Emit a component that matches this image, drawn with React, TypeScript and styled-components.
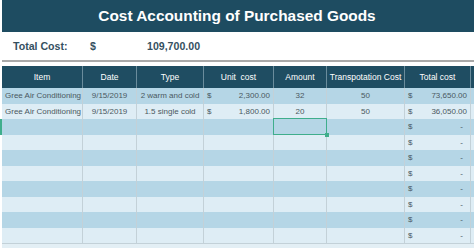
import React from "react";
import styled, { createGlobalStyle } from "styled-components";

const GlobalStyle = createGlobalStyle`
  html, body {
    margin: 0;
    padding: 0;
    background: #ffffff;
    font-family: "Liberation Sans", Arial, sans-serif;
  }
`;

const Sheet = styled.div`
  width: 474px;
  height: 248px;
  overflow: hidden;
  padding-left: 2px;
  box-sizing: border-box;
`;

const TitleBar = styled.div`
  height: 32px;
  background: #1e4c61;
  color: #ffffff;
  display: flex;
  align-items: center;
  justify-content: center;
  font-size: 15.4px;
  font-weight: bold;
  padding-right: 2px;
`;

const TotalRow = styled.div`
  height: 28px;
  display: flex;
  align-items: center;
  font-size: 10.6px;
  font-weight: bold;
  color: #35505f;
  border-bottom: 2px solid #a9a9a9;
`;

const TotalLabel = styled.span`
  width: 77px;
  padding-left: 11px;
`;

const TotalCurrency = styled.span`
  width: 57px;
`;

const Spacer = styled.div`
  height: 4px;
`;

const Table = styled.div`
  margin-left: -2px;
`;

const columns = "2px 81px 54px 67px 70px 53px 78px 66px 1fr";

const HeaderRow = styled.div`
  display: grid;
  grid-template-columns: ${columns};
  height: 22px;
`;

const HeaderCell = styled.div<{ $last?: boolean }>`
  background: #1f4d62;
  color: #ffffff;
  font-size: 8.5px;
  display: flex;
  align-items: center;
  justify-content: center;
  white-space: nowrap;
  border-right: 1px solid ${(p) => (p.$last ? "transparent" : "#6a8c9c")};
`;

const Gutter = styled.div<{ $active?: boolean }>`
  background: ${(p) => (p.$active ? "#3fae8c" : "#ffffff")};
`;

const DataRow = styled.div<{ $dark: boolean }>`
  display: grid;
  grid-template-columns: ${columns};
  height: 15.5px;
  background: ${(p) => (p.$dark ? "#b5d6e6" : "#deedf5")};
`;

const FillerRow = styled.div`
  height: 5px;
  margin-left: 2px;
  border-top: 1px solid #c3d1d8;
  background: #e3eff5;
`;

const Cell = styled.div<{ $align?: "left" | "center" | "right"; $open?: boolean }>`
  position: relative;
  font-size: 8px;
  color: #4a5861;
  display: flex;
  align-items: center;
  justify-content: ${(p) =>
    p.$align === "center" ? "center" : p.$align === "right" ? "flex-end" : "flex-start"};
  padding: 0 3px 0 3px;
  white-space: nowrap;
  overflow: ${(p) => (p.$open ? "visible" : "hidden")};
  border-right: 1px solid #c3d1d8;
  box-sizing: border-box;
`;

const Money = styled(Cell)`
  justify-content: space-between;
`;

const Selection = styled.div`
  position: absolute;
  top: -1px;
  left: -1px;
  right: -1px;
  bottom: 0;
  border: 1.5px solid #3fae8c;
  pointer-events: none;
  z-index: 2;
  &::after {
    content: "";
    position: absolute;
    right: -3px;
    bottom: -3px;
    width: 4px;
    height: 4px;
    background: #3fae8c;
  }
`;

type Row = {
  item: string;
  date: string;
  type: string;
  unit: string;
  amount: string;
  transport: string;
  total: string;
};

const rows: Row[] = [
  { item: "Gree Air Conditioning", date: "9/15/2019", type: "2 warm and cold", unit: "2,300.00", amount: "32", transport: "50", total: "73,650.00" },
  { item: "Gree Air Conditioning", date: "9/15/2019", type: "1.5 single cold", unit: "1,800.00", amount: "20", transport: "50", total: "36,050.00" },
];

const headers = ["Item", "Date", "Type", "Unit\u00a0\u00a0cost", "Amount", "Transpotation Cost", "Total cost", ""];

export default function App() {
  const all: (Row | null)[] = [...rows, ...Array(8).fill(null)];
  return (
    <Sheet>
      <GlobalStyle />
      <TitleBar>Cost Accounting of Purchased Goods</TitleBar>
      <TotalRow>
        <TotalLabel>Total Cost:</TotalLabel>
        <TotalCurrency>$</TotalCurrency>
        <span>109,700.00</span>
      </TotalRow>
      <Spacer />
      <Table>
        <HeaderRow>
          <Gutter />
          {headers.map((h, i) => (
            <HeaderCell key={i} $last={i === headers.length - 1}>
              {h}
            </HeaderCell>
          ))}
        </HeaderRow>
        {all.map((r, i) => (
          <DataRow key={i} $dark={i % 2 === 0}>
            <Gutter $active={i === 2} />
            <Cell>{r?.item}</Cell>
            <Cell $align="center">{r?.date}</Cell>
            <Cell $align="center">{r?.type}</Cell>
            {r ? (
              <Money>
                <span>$</span>
                <span>{r.unit}</span>
              </Money>
            ) : (
              <Cell />
            )}
            <Cell $align="center" $open={i === 2}>
              {r?.amount}
              {i === 2 && <Selection />}
            </Cell>
            <Cell $align="center">{r?.transport}</Cell>
            <Money>
              <span>$</span>
              <span style={{ paddingRight: r ? 0 : 4 }}>{r ? r.total : "-"}</span>
            </Money>
            <Cell />
          </DataRow>
        ))}
        <FillerRow />
      </Table>
    </Sheet>
  );
}
